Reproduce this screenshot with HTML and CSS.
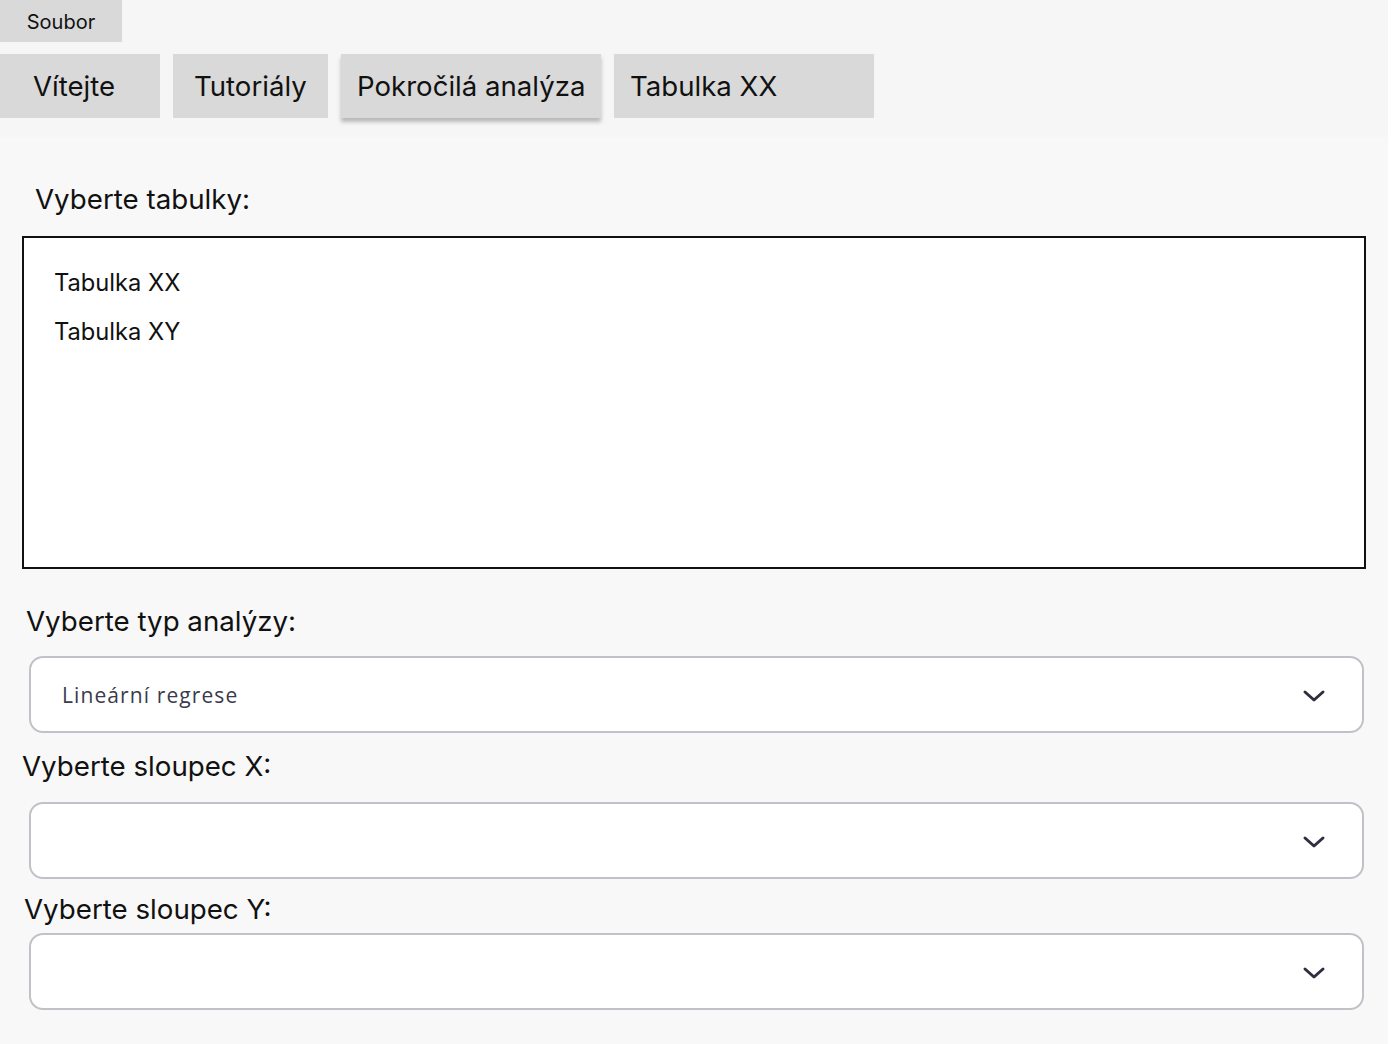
FILE: index.html
```html
<!DOCTYPE html>
<html lang="cs">
<head>
<meta charset="utf-8">
<title>Pokročilá analýza</title>
<link rel="stylesheet" href="styles.css">
</head>
<body>
<div class="page">
  <header class="header">
    <button class="menu-btn">Soubor</button>
    <nav class="tabs">
      <button class="tab tab-1">Vítejte</button>
      <button class="tab tab-2">Tutoriály</button>
      <button class="tab tab-3 active">Pokročilá analýza</button>
      <button class="tab tab-4">Tabulka XX</button>
    </nav>
  </header>
  <main class="content">
    <div class="label label-tables">Vyberte tabulky:</div>
    <div class="listbox">
      <div class="list-item">Tabulka XX</div>
      <div class="list-item">Tabulka XY</div>
    </div>
    <div class="label label-type">Vyberte typ analýzy:</div>
    <div class="select">
      <span class="select-value">Lineární regrese</span>
      <svg class="chevron" width="24" height="14" viewBox="0 0 24 14"><path d="M3 3 L12 11 L21 3" fill="none" stroke="#2e2e40" stroke-width="3" stroke-linecap="round" stroke-linejoin="round"/></svg>
    </div>
    <div class="label label-x">Vyberte sloupec X:</div>
    <div class="select select-x">
      <span class="select-value"></span>
      <svg class="chevron" width="24" height="14" viewBox="0 0 24 14"><path d="M3 3 L12 11 L21 3" fill="none" stroke="#2e2e40" stroke-width="3" stroke-linecap="round" stroke-linejoin="round"/></svg>
    </div>
    <div class="label label-y">Vyberte sloupec Y:</div>
    <div class="select select-y">
      <span class="select-value"></span>
      <svg class="chevron" width="24" height="14" viewBox="0 0 24 14"><path d="M3 3 L12 11 L21 3" fill="none" stroke="#2e2e40" stroke-width="3" stroke-linecap="round" stroke-linejoin="round"/></svg>
    </div>
  </main>
</div>
</body>
</html>
```
FILE: styles.css
```css
* { box-sizing: border-box; }
html, body { margin: 0; padding: 0; }
body {
  background: #ffffff;
  font-family: "Inter", "Liberation Sans", sans-serif;
  color: #111;
}
.page {
  width: 1388px;
  min-height: 1044px;
  background: #f8f8f8;
}
.header {
  display: flex;
  flex-direction: column;
  align-items: flex-start;
  gap: 12px;
  padding-bottom: 19px;
  background: #f6f6f6;
}
button {
  font-family: "Inter", "Liberation Sans", sans-serif;
  border: none;
  background: #d9d9d9;
  color: #111;
  cursor: pointer;
}
.menu-btn {
  width: 122px;
  height: 42px;
  font-size: 20px;
  padding: 2px 0 0 0;
}
.tabs {
  display: flex;
  gap: 13px;
}
.tab {
  height: 64px;
  font-size: 27.6px;
  text-align: left;
  padding: 0;
}
.tab-1 { width: 160px; padding-left: 33px; }
.tab-2 { width: 155px; padding-left: 21px; }
.tab-3 { width: 260px; padding-left: 16px; }
.tab-4 { width: 260px; padding-left: 16px; }
.tab.active {
  box-shadow: 0 4px 4px rgba(0, 0, 0, 0.25);
}
.content {
  display: flex;
  flex-direction: column;
  align-items: flex-start;
  padding-top: 45px;
}
.label {
  font-size: 27.7px;
  line-height: 34px;
  color: #111;
}
.label-tables { margin-left: 35px; margin-bottom: 20px; }
.listbox {
  margin-left: 22px;
  width: 1344px;
  height: 333px;
  background: #fff;
  border: 2px solid #111;
  padding: 20px 0 0 30px;
}
.list-item {
  font-size: 23.7px;
  line-height: 49px;
}
.label-type { margin-left: 26px; margin-top: 35px; margin-bottom: 18px; }
.select {
  margin-left: 29px;
  width: 1335px;
  height: 77px;
  background: #fff;
  border: 2px solid #c1c2c7;
  border-radius: 14px;
  display: flex;
  align-items: center;
  justify-content: space-between;
  padding: 0 36px 0 31px;
}
.select-value {
  font-family: "Open Sans", "Inter", sans-serif;
  font-weight: 500;
  font-size: 21px;
  color: #3a3a4c;
  letter-spacing: 1.1px;
}
.chevron { display: block; margin-top: 2px; }
.label-x { margin-left: 22px; margin-top: 16px; margin-bottom: 19px; }
.label-y { margin-left: 24px; margin-top: 13px; margin-bottom: 7px; }
```
